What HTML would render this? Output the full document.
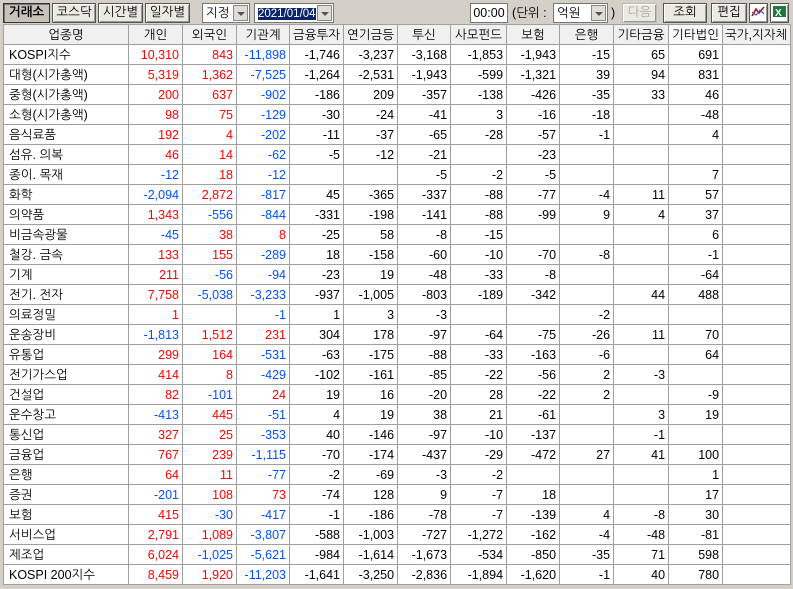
<!DOCTYPE html>
<html><head><meta charset="utf-8"><style>
*{box-sizing:border-box;margin:0;padding:0}
body{width:793px;height:589px;background:#d4d0c8;font-family:"Liberation Sans","NanumGothic","Noto Sans CJK KR",sans-serif;font-size:12px;position:relative;overflow:hidden;color:#000}
.b{position:absolute;top:3px;height:20px;background:#ece9e2;border:1px solid #555;box-shadow:inset 1px 1px 0 #fff,inset -1px -1px 0 #999;text-align:center;line-height:17px;font-size:12.5px}
.b.on{background:#c8c4bc;box-shadow:inset 1px 1px 0 #777;font-weight:bold;border-color:#333}
.sel{position:absolute;top:3px;height:20px;background:#fff;border:1px solid #777;line-height:18px;padding-left:3px;font-size:12.5px}
.arr{position:absolute;right:1px;top:1px;width:15px;height:16px;background:#e0ddd6;border:1px solid #888}
.arr:after{content:"";position:absolute;left:3px;top:6px;border-left:4px solid transparent;border-right:4px solid transparent;border-top:4px solid #555}
.t{position:absolute;top:3px;line-height:20px;font-size:12.5px}
table{position:absolute;left:3px;top:24px;border-collapse:collapse;table-layout:fixed;background:#fff}
td,th{border:1px solid #a0a0a0;height:20px;padding:0 3px;white-space:nowrap;overflow:hidden;font-weight:normal;font-size:12.5px;line-height:18px}
th{background:#f0f0f0;text-align:center}
td{text-align:right}
td:first-child{text-align:left;padding-left:5px}
.r{color:#f00}.u{color:#0050ff}
</style></head><body>
<div class="b on" style="left:3px;width:47px">거래소</div>
<div class="b" style="left:52px;width:44px">코스닥</div>
<div class="b" style="left:98px;width:45px">시간별</div>
<div class="b" style="left:145px;width:45px">일자별</div>
<div class="sel" style="left:202px;width:48px">지정<div class="arr"></div></div>
<div class="sel" style="left:254px;width:80px"><span style="background:#0a246a;color:#fff;font-size:11.5px">2021/01/04</span><div class="arr"></div></div>
<div class="sel" style="left:470px;width:38px;text-align:center;padding:0">00:00</div>
<div class="t" style="left:512px">(단위 :</div>
<div class="sel" style="left:553px;width:55px">억원<div class="arr"></div></div>
<div class="t" style="left:611px">)</div>
<div class="b" style="left:622px;width:35px;color:#aaa;border-color:#bbb">다음</div>
<div class="b" style="left:663px;width:44px">조회</div>
<div class="b" style="left:711px;width:36px">편집</div>
<div class="b" style="left:749px;width:19px;background:#fff"><svg width="15" height="15" viewBox="0 0 15 15"><polyline points="1,12 5,5 8,9 13,3" fill="none" stroke="#c00" stroke-width="1.5"/><polyline points="1,8 5,11 9,6 13,10" fill="none" stroke="#36c" stroke-width="1.2"/></svg></div>
<div class="b" style="left:770px;width:19px;background:#fff"><svg width="15" height="15" viewBox="0 0 15 15"><rect x="1" y="2" width="13" height="11" fill="#1e7a3a"/><text x="3" y="12" font-size="10" fill="#fff" font-family="Liberation Sans" font-weight="bold">X</text></svg></div>
<table id="t"><colgroup>
<col style="width:125px"><col style="width:54px"><col style="width:54px"><col style="width:53px"><col style="width:54px"><col style="width:54px"><col style="width:53px"><col style="width:56px"><col style="width:53px"><col style="width:54px"><col style="width:55px"><col style="width:54px"><col style="width:68px">
</colgroup>
<tr><th>업종명</th><th>개인</th><th>외국인</th><th>기관계</th><th>금융투자</th><th>연기금등</th><th>투신</th><th>사모펀드</th><th>보험</th><th>은행</th><th>기타금융</th><th style="background:#fafafa">기타법인</th><th style="text-align:left;padding-left:2px">국가,지자체</th></tr>
</table>
<script>
var d=`KOSPI지수|10,310|843|-11,898|-1,746|-3,237|-3,168|-1,853|-1,943|-15|65|691
대형(시가총액)|5,319|1,362|-7,525|-1,264|-2,531|-1,943|-599|-1,321|39|94|831
중형(시가총액)|200|637|-902|-186|209|-357|-138|-426|-35|33|46
소형(시가총액)|98|75|-129|-30|-24|-41|3|-16|-18||-48
음식료품|192|4|-202|-11|-37|-65|-28|-57|-1||4
섬유. 의복|46|14|-62|-5|-12|-21||-23|||
종이. 목재|-12|18|-12|||-5|-2|-5|||7
화학|-2,094|2,872|-817|45|-365|-337|-88|-77|-4|11|57
의약품|1,343|-556|-844|-331|-198|-141|-88|-99|9|4|37
비금속광물|-45|38|8|-25|58|-8|-15||||6
철강. 금속|133|155|-289|18|-158|-60|-10|-70|-8||-1
기계|211|-56|-94|-23|19|-48|-33|-8|||-64
전기. 전자|7,758|-5,038|-3,233|-937|-1,005|-803|-189|-342||44|488
의료정밀|1||-1|1|3|-3|||-2||
운송장비|-1,813|1,512|231|304|178|-97|-64|-75|-26|11|70
유통업|299|164|-531|-63|-175|-88|-33|-163|-6||64
전기가스업|414|8|-429|-102|-161|-85|-22|-56|2|-3|
건설업|82|-101|24|19|16|-20|28|-22|2||-9
운수창고|-413|445|-51|4|19|38|21|-61||3|19
통신업|327|25|-353|40|-146|-97|-10|-137||-1|
금융업|767|239|-1,115|-70|-174|-437|-29|-472|27|41|100
은행|64|11|-77|-2|-69|-3|-2||||1
증권|-201|108|73|-74|128|9|-7|18|||17
보험|415|-30|-417|-1|-186|-78|-7|-139|4|-8|30
서비스업|2,791|1,089|-3,807|-588|-1,003|-727|-1,272|-162|-4|-48|-81
제조업|6,024|-1,025|-5,621|-984|-1,614|-1,673|-534|-850|-35|71|598
KOSPI 200지수|8,459|1,920|-11,203|-1,641|-3,250|-2,836|-1,894|-1,620|-1|40|780`;
var h='';d.split('\n').forEach(function(l){var c=l.split('|');while(c.length<13)c.push('');h+='<tr>';c.forEach(function(v,i){var cl='';if(i>=1&&i<=3&&v)cl=v[0]=='-'?'u':'r';h+='<td class="'+cl+'">'+v+'</td>';});h+='</tr>';});
document.getElementById('t').insertAdjacentHTML('beforeend',h);
</script>
</body></html>
